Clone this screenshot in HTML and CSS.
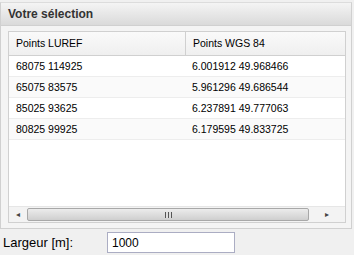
FILE: index.html
```html
<!DOCTYPE html>
<html lang="fr">
<head>
    <meta charset="UTF-8">
    <title>Votre sélection</title>
    <link rel="stylesheet" href="styles.css">
</head>
<body>
    <div class="panel">
        <div class="panel-header">Votre sélection</div>
        <div class="panel-body">
            <div class="grid">
                <div class="grid-head">
                    <div class="cell col-a">Points LUREF</div>
                    <div class="cell col-b">Points WGS 84</div>
                </div>
                <div class="grid-rows">
                    <div class="row">
                        <div class="cell col-a">68075 114925</div>
                        <div class="cell col-b">6.001912 49.968466</div>
                    </div>
                    <div class="row alt">
                        <div class="cell col-a">65075 83575</div>
                        <div class="cell col-b">5.961296 49.686544</div>
                    </div>
                    <div class="row">
                        <div class="cell col-a">85025 93625</div>
                        <div class="cell col-b">6.237891 49.777063</div>
                    </div>
                    <div class="row alt">
                        <div class="cell col-a">80825 99925</div>
                        <div class="cell col-b">6.179595 49.833725</div>
                    </div>
                </div>
                <!-- horizontal scrollbar -->
                <div class="hscroll">
                    <div class="arrow">&#9666;</div>
                    <div class="thumb"><span class="grip"></span></div>
                    <div class="arrow right">&#9656;</div>
                </div>
            </div>
        </div>
    </div>
    <div class="field">
        <label class="field-label">Largeur [m]:</label>
        <input class="field-input" type="text" value="1000">
    </div>
</body>
</html>
```
FILE: styles.css
```css
body {
    margin: 0;
    background-color: #f0f0f0;
    font-family: "Liberation Sans", Arial, sans-serif;
    color: #000;
}

/* Panel */
.panel {
    margin-top: 2px;
    width: 350px;
    border: 1px solid #d0d0d0;
    border-top-color: #dcdcdc;
}
.panel-header {
    height: 22px;
    line-height: 22px;
    padding-left: 7px;
    font-size: 12px;
    font-weight: bold;
    color: #333;
    background: linear-gradient(#f4f4f4, #dadada);
    border-bottom: 1px solid #d0d0d0;
}
.panel-body {
    padding: 5px 5px 5px 7px;
    background-color: #f4f4f4;
}

/* Grid */
.grid {
    height: 190px;
    border: 1px solid #d0d0d0;
    background-color: #fff;
    display: flex;
    flex-direction: column;
    font-size: 10.5px;
}
.grid-head {
    display: flex;
    height: 23px;
    background: linear-gradient(#fafafa, #efefef);
    border-bottom: 1px solid #d0d0d0;
}
.grid-head .cell {
    line-height: 23px;
}
.grid-head .col-a {
    border-right: 1px solid #d0d0d0;
}
.grid-rows {
    flex: 1;
}
.row {
    display: flex;
    height: 20px;
    border-bottom: 1px solid #ededed;
}
.row.alt {
    background-color: #fafafa;
}
.cell {
    line-height: 20px;
    padding-left: 7px;
    white-space: nowrap;
}
.col-a {
    width: 169px;
}
.col-b {
    flex: 1;
}

/* Scrollbar */
.hscroll {
    display: flex;
    height: 15px;
    background-color: #f3f3f3;
    border-top: 1px solid #e6e6e6;
}
.arrow {
    width: 18px;
    font-size: 8px;
    line-height: 15px;
    text-align: center;
    color: #444;
}
.arrow.right {
    width: 36px;
}
.thumb {
    flex: 1;
    margin: 1px 0;
    border: 1px solid #a8a8a8;
    border-radius: 2px;
    background: linear-gradient(#ececec, #cfcfcf);
    display: flex;
    justify-content: center;
    align-items: center;
}
.grip {
    width: 7px;
    height: 6px;
    background: repeating-linear-gradient(90deg, #555 0 1px, #dedede 1px 3px);
}

/* Field */
.field {
    display: flex;
    align-items: center;
    margin-top: 3px;
}
.field-label {
    width: 107px;
    padding-left: 3px;
    box-sizing: border-box;
    font-size: 13px;
}
.field-input {
    width: 128px;
    height: 21px;
    box-sizing: border-box;
    border: 1px solid #abadc3;
    padding: 2px 4px;
    font-family: "Liberation Sans", Arial, sans-serif;
    font-size: 12px;
    background-color: #fff;
}
```
